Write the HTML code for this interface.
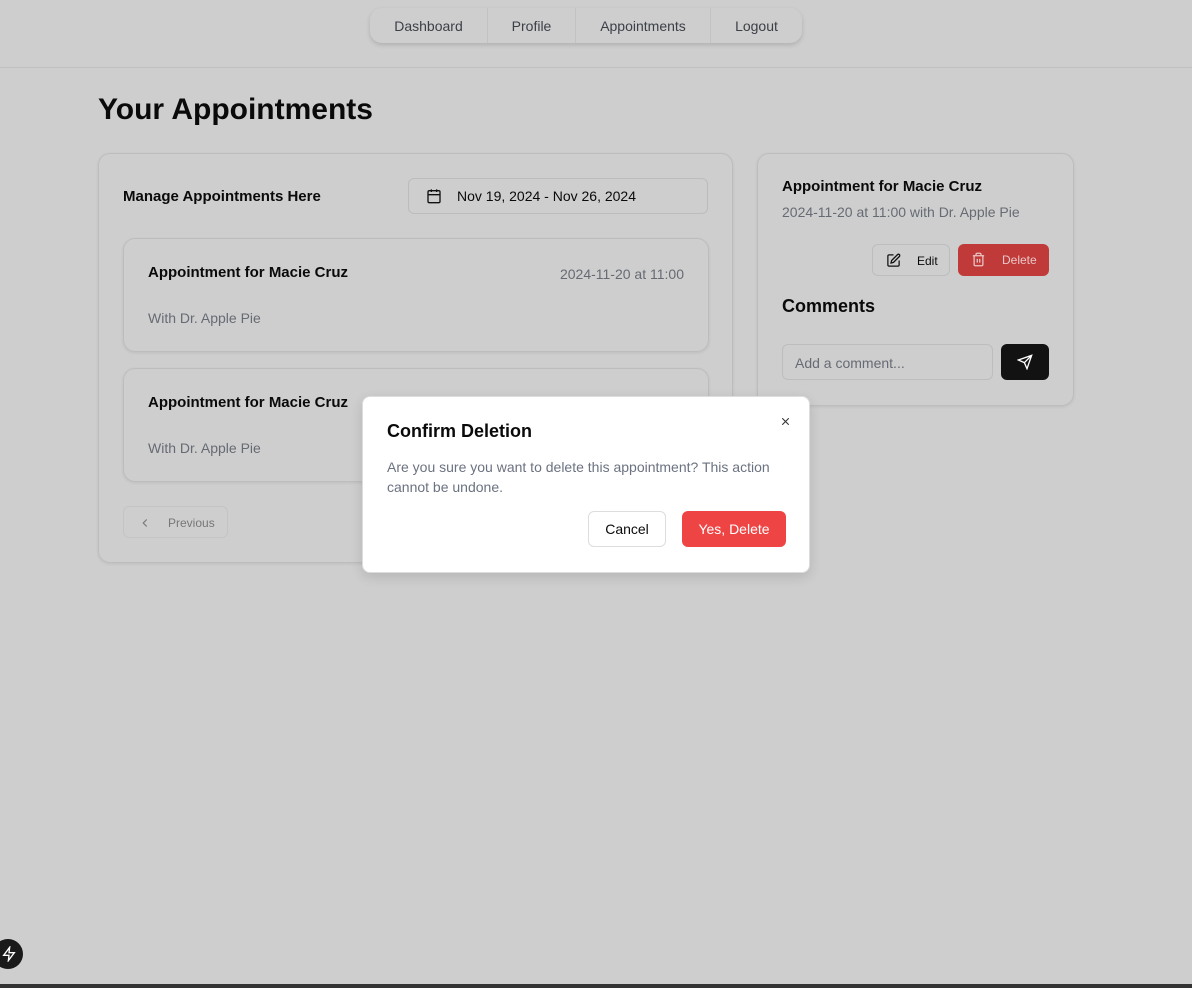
<!DOCTYPE html>
<html><head><meta charset="utf-8"><style>
*{box-sizing:border-box;margin:0;padding:0}
body{width:1192px;height:988px;background:#cecece;font-family:"Liberation Sans",sans-serif;position:relative;overflow:hidden;color:#0a0a0a}
.nav{position:absolute;left:370px;top:8px;width:432px;height:35px;border-radius:12px;box-shadow:0 2px 5px rgba(0,0,0,.15);display:flex;font-size:14px;color:#3b3f46;background:#cecece}
.nav div{display:flex;align-items:center;justify-content:center;border-right:1px solid #c2c2c2}
.nav div:last-child{border:none}
.hr{position:absolute;left:0;right:0;top:67px;border-top:1px solid #c0c0c0}
h1{position:absolute;left:98px;top:93px;font-size:30px;font-weight:700}
.card{position:absolute;border:1px solid #bdbdbd;border-radius:12px;box-shadow:0 1px 3px rgba(0,0,0,.08)}
.b{font-weight:700}
.muted{color:#666b73}
.abs{position:absolute}
.btn{position:absolute;border-radius:6px;display:flex;align-items:center;font-size:12px}
</style></head><body>
<div class="nav"><div style="width:118px">Dashboard</div><div style="width:88px">Profile</div><div style="width:135px">Appointments</div><div style="width:91px">Logout</div></div>
<div class="hr"></div>
<h1>Your Appointments</h1>

<div class="card" style="left:98px;top:153px;width:635px;height:410px">
<div class="abs b" style="left:24px;top:34px;font-size:15px">Manage Appointments Here</div>
<div class="abs" style="left:309px;top:24px;width:300px;height:36px;border:1px solid #bcbcbc;border-radius:6px;font-size:14px">
<svg class="abs" style="left:17px;top:9px" width="16" height="16" viewBox="0 0 24 24" fill="none" stroke="#111" stroke-width="2"><rect x="3" y="4" width="18" height="18" rx="2"/><path d="M16 2v4M8 2v4M3 10h18"/></svg>
<span class="abs" style="left:48px;top:9px">Nov 19, 2024 - Nov 26, 2024</span></div>
<div class="card" style="left:24px;top:84px;width:586px;height:114px">
<div class="abs b" style="left:24px;top:25px;font-size:15px">Appointment for Macie Cruz</div>
<div class="abs muted" style="right:24px;top:27px;font-size:14px">2024-11-20 at 11:00</div>
<div class="abs muted" style="left:24px;top:71px;font-size:14px">With Dr. Apple Pie</div></div>
<div class="card" style="left:24px;top:214px;width:586px;height:114px">
<div class="abs b" style="left:24px;top:25px;font-size:15px">Appointment for Macie Cruz</div>
<div class="abs muted" style="left:24px;top:71px;font-size:14px">With Dr. Apple Pie</div></div>
<div class="btn" style="left:24px;top:352px;width:105px;height:32px;border:1px solid #c4c4c4;color:#777">
<svg class="abs" style="left:14px;top:9px" width="14" height="14" viewBox="0 0 24 24" fill="none" stroke="#777" stroke-width="2"><path d="M15 18l-6-6 6-6"/></svg>
<span class="abs" style="left:44px;top:9px">Previous</span></div>
</div>

<div class="card" style="left:757px;top:153px;width:317px;height:253px">
<div class="abs b" style="left:24px;top:24px;font-size:15px">Appointment for Macie Cruz</div>
<div class="abs muted" style="left:24px;top:50px;font-size:14px">2024-11-20 at 11:00 with Dr. Apple Pie</div>
<div class="btn" style="left:114px;top:90px;width:78px;height:32px;border:1px solid #bdbdbd">
<svg class="abs" style="left:13px;top:8px" width="15" height="15" viewBox="0 0 24 24" fill="none" stroke="#111" stroke-width="2"><path d="M12 3H5a2 2 0 0 0-2 2v14a2 2 0 0 0 2 2h14a2 2 0 0 0 2-2v-7"/><path d="M18.4 2.6a2.1 2.1 0 0 1 3 3L12 15l-4 1 1-4z"/></svg>
<span class="abs" style="left:44px;top:9px">Edit</span></div>
<div class="btn" style="left:200px;top:90px;width:91px;height:32px;background:#c03a3a;color:#e8c8c8">
<svg class="abs" style="left:13px;top:8px" width="15" height="15" viewBox="0 0 24 24" fill="none" stroke="#e8c8c8" stroke-width="2"><path d="M3 6h18M19 6v14a2 2 0 0 1-2 2H7a2 2 0 0 1-2-2V6M8 6V4a2 2 0 0 1 2-2h4a2 2 0 0 1 2 2v2M10 11v6M14 11v6"/></svg>
<span class="abs" style="left:44px;top:9px">Delete</span></div>
<div class="abs b" style="left:24px;top:142px;font-size:18px">Comments</div>
<div class="abs muted" style="left:24px;top:190px;width:211px;height:36px;border:1px solid #bdbdbd;border-radius:6px;font-size:14px;padding:10px 12px">Add a comment...</div>
<div class="abs" style="left:243px;top:190px;width:48px;height:36px;border-radius:6px;background:#121212">
<svg class="abs" style="left:16px;top:10px" width="16" height="16" viewBox="0 0 24 24" fill="none" stroke="#fff" stroke-width="2"><path d="M22 2L11 13M22 2l-7 20-4-9-9-4z"/></svg></div>
</div>

<div class="abs" style="left:362px;top:396px;width:448px;height:177px;background:#fff;border:1px solid #ddd;border-radius:8px;box-shadow:0 4px 12px rgba(0,0,0,.12)">
<div class="abs b" style="left:24px;top:24px;font-size:18px">Confirm Deletion</div>
<svg class="abs" style="left:416px;top:18px" width="13" height="13" viewBox="0 0 24 24" fill="none" stroke="#333" stroke-width="2"><path d="M18 6L6 18M6 6l12 12"/></svg>
<div class="abs" style="left:24px;top:60px;width:400px;font-size:14px;line-height:20px;color:#6b7280">Are you sure you want to delete this appointment? This action cannot be undone.</div>
<div class="btn" style="left:225px;top:114px;width:78px;height:36px;border:1px solid #ddd;justify-content:center;font-size:14px">Cancel</div>
<div class="btn" style="left:319px;top:114px;width:104px;height:36px;background:#ef4444;color:#fff;justify-content:center;font-size:14px">Yes, Delete</div>
</div>

<div class="abs" style="left:-7px;top:939px;width:30px;height:30px;border-radius:50%;background:#1a1a1a">
<svg class="abs" style="left:8px;top:7px" width="16" height="16" viewBox="0 0 24 24" fill="none" stroke="#fff" stroke-width="2"><path d="M13 2L4 14h8l-1 8 9-12h-8z"/></svg></div>
<div class="abs" style="left:0;right:0;top:984px;height:4px;background:#333"></div>
</body></html>
